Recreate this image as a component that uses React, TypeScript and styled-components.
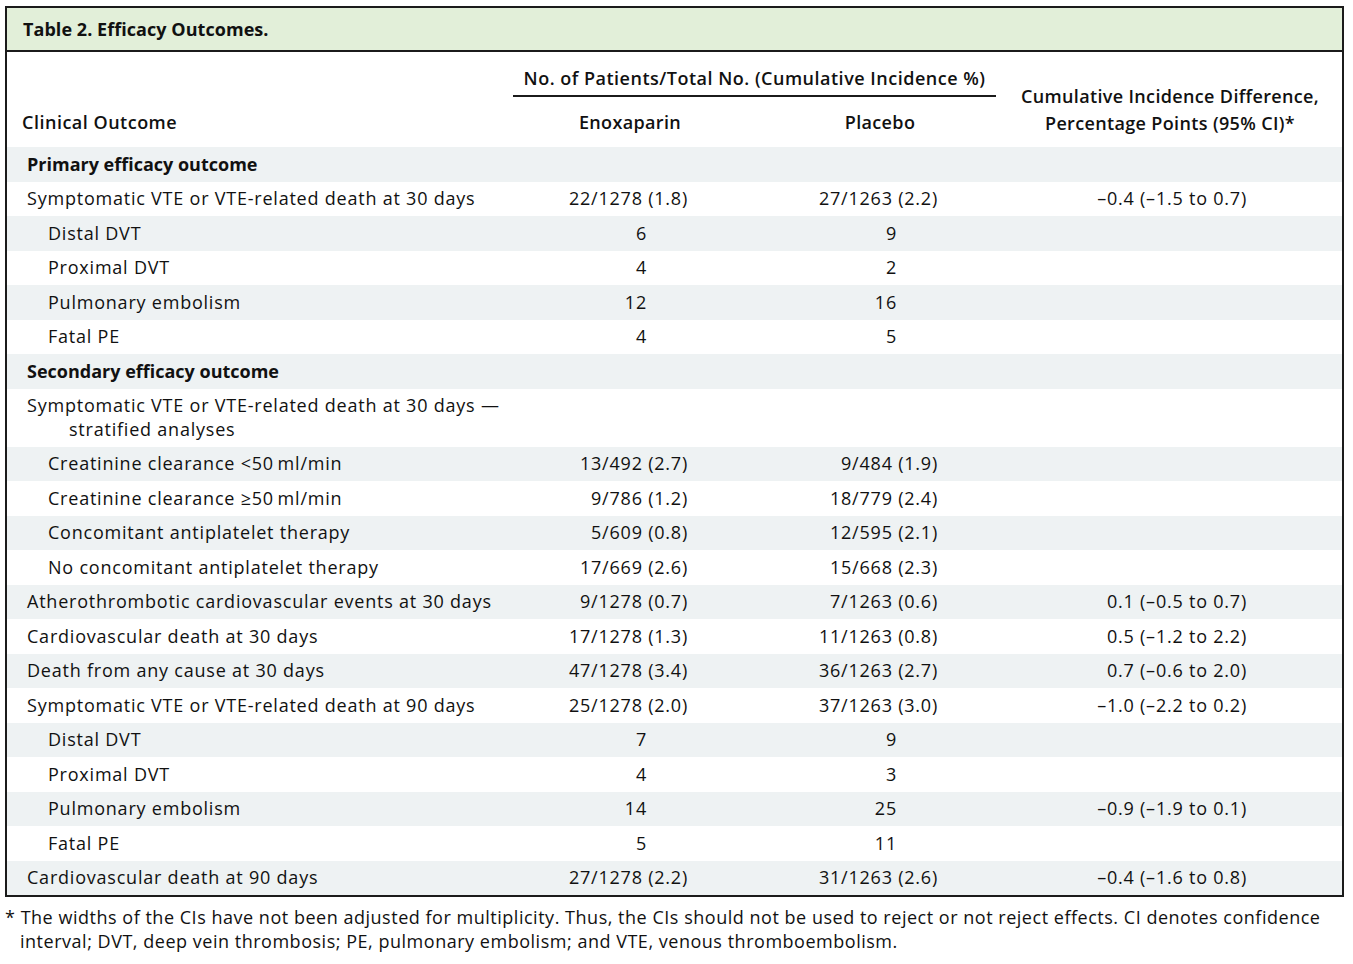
import React from "react";
import styled, { createGlobalStyle } from "styled-components";

const GlobalStyle = createGlobalStyle`
  html, body { margin: 0; padding: 0; background: #ffffff; }
  body {
    font-family: "Open Sans", "Noto Sans", "Liberation Sans", sans-serif;
    color: #111111;
  }
`;

const Page = styled.div`
  padding: 6px 0 0 5px;
  width: 1353px;
  box-sizing: border-box;
`;

const TableBox = styled.div`
  width: 1339px;
  box-sizing: border-box;
  border: 2px solid #1b1b1b;
`;

const TitleBar = styled.div`
  background: #e2efd9;
  border-bottom: 2px solid #1b1b1b;
  height: 42px;
  display: flex;
  align-items: center;
  padding-left: 16px;
  font-size: 18px;
  font-weight: 700;
  letter-spacing: 0.05px;
`;

const cols = "498px 250px 250px 330px";

const HeaderGrid = styled.div`
  display: grid;
  grid-template-columns: ${cols};
  grid-template-rows: 45px 50px;
  font-weight: 600;
  font-size: 18px;
  letter-spacing: 0.35px;
`;

const OutcomeHead = styled.div`
  grid-column: 1;
  grid-row: 1 / span 2;
  display: flex;
  align-items: flex-end;
  padding: 0 0 13px 15px;
  line-height: 24px;
  letter-spacing: 0.5px;
`;

const GroupHead = styled.div`
  grid-column: 2 / span 2;
  grid-row: 1;
  margin: 14px 9px 0 8px;
  padding-bottom: 5px;
  border-bottom: 2px solid #1b1b1b;
  text-align: center;
  line-height: 24px;
  letter-spacing: 0.5px;
`;

const SubHead = styled.div<{ $col: number }>`
  grid-column: ${(p) => p.$col};
  grid-row: 2;
  text-align: center;
  line-height: 24px;
  padding-top: 13px;
`;

const DiffHead = styled.div`
  grid-column: 4;
  grid-row: 1 / span 2;
  display: flex;
  align-items: flex-end;
  justify-content: center;
  text-align: center;
  line-height: 26.5px;
  padding-bottom: 11px;
`;

const Row = styled.div<{ $shaded: boolean }>`
  display: grid;
  grid-template-columns: ${cols};
  background: ${(p) => (p.$shaded ? "#eef2f3" : "#ffffff")};
  font-size: 18px;
  line-height: 23.5px;
  padding: 5.5px 0;
  letter-spacing: 0.78px;
`;

const Label = styled.div<{ $level: number; $bold?: boolean }>`
  padding-left: ${(p) => (p.$level === 0 ? 62 : 83)}px;
  text-indent: -42px;
  font-weight: ${(p) => (p.$bold ? 700 : 400)};
  letter-spacing: ${(p) => (p.$bold ? "0px" : "0.78px")};
  white-space: pre-line;
`;

const Value = styled.div<{ $count?: boolean }>`
  text-align: right;
  padding-right: ${(p) => (p.$count ? 108 : 67)}px;
`;

const Diff = styled.div`
  text-align: right;
  padding-right: 88px;
`;

const Footnote = styled.div`
  margin-top: 8px;
  padding-left: 15px;
  text-indent: -15px;
  font-size: 18px;
  line-height: 24px;
  letter-spacing: 0.52px;
  width: 1345px;
  box-sizing: border-box;
`;

type Item =
  | { kind: "section"; label: string }
  | {
      kind: "data";
      label: string;
      level: number;
      enox?: string;
      plac?: string;
      diff?: string;
      count?: boolean;
    };

const items: Item[] = [
  { kind: "section", label: "Primary efficacy outcome" },
  {
    kind: "data",
    label: "Symptomatic VTE or VTE-related death at 30 days",
    level: 0,
    enox: "22/1278 (1.8)",
    plac: "27/1263 (2.2)",
    diff: "–0.4 (–1.5 to 0.7)",
  },
  { kind: "data", label: "Distal DVT", level: 1, enox: "6", plac: "9", count: true },
  { kind: "data", label: "Proximal DVT", level: 1, enox: "4", plac: "2", count: true },
  { kind: "data", label: "Pulmonary embolism", level: 1, enox: "12", plac: "16", count: true },
  { kind: "data", label: "Fatal PE", level: 1, enox: "4", plac: "5", count: true },
  { kind: "section", label: "Secondary efficacy outcome" },
  {
    kind: "data",
    label: "Symptomatic VTE or VTE-related death at 30 days —\nstratified analyses",
    level: 0,
  },
  {
    kind: "data",
    label: "Creatinine clearance <50\u2009ml/min",
    level: 1,
    enox: "13/492 (2.7)",
    plac: "9/484 (1.9)",
  },
  {
    kind: "data",
    label: "Creatinine clearance \u226550\u2009ml/min",
    level: 1,
    enox: "9/786 (1.2)",
    plac: "18/779 (2.4)",
  },
  {
    kind: "data",
    label: "Concomitant antiplatelet therapy",
    level: 1,
    enox: "5/609 (0.8)",
    plac: "12/595 (2.1)",
  },
  {
    kind: "data",
    label: "No concomitant antiplatelet therapy",
    level: 1,
    enox: "17/669 (2.6)",
    plac: "15/668 (2.3)",
  },
  {
    kind: "data",
    label: "Atherothrombotic cardiovascular events at 30 days",
    level: 0,
    enox: "9/1278 (0.7)",
    plac: "7/1263 (0.6)",
    diff: "0.1 (–0.5 to 0.7)",
  },
  {
    kind: "data",
    label: "Cardiovascular death at 30 days",
    level: 0,
    enox: "17/1278 (1.3)",
    plac: "11/1263 (0.8)",
    diff: "0.5 (–1.2 to 2.2)",
  },
  {
    kind: "data",
    label: "Death from any cause at 30 days",
    level: 0,
    enox: "47/1278 (3.4)",
    plac: "36/1263 (2.7)",
    diff: "0.7 (–0.6 to 2.0)",
  },
  {
    kind: "data",
    label: "Symptomatic VTE or VTE-related death at 90 days",
    level: 0,
    enox: "25/1278 (2.0)",
    plac: "37/1263 (3.0)",
    diff: "–1.0 (–2.2 to 0.2)",
  },
  { kind: "data", label: "Distal DVT", level: 1, enox: "7", plac: "9", count: true },
  { kind: "data", label: "Proximal DVT", level: 1, enox: "4", plac: "3", count: true },
  {
    kind: "data",
    label: "Pulmonary embolism",
    level: 1,
    enox: "14",
    plac: "25",
    count: true,
    diff: "–0.9 (–1.9 to 0.1)",
  },
  { kind: "data", label: "Fatal PE", level: 1, enox: "5", plac: "11", count: true },
  {
    kind: "data",
    label: "Cardiovascular death at 90 days",
    level: 0,
    enox: "27/1278 (2.2)",
    plac: "31/1263 (2.6)",
    diff: "–0.4 (–1.6 to 0.8)",
  },
];

export default function App() {
  return (
    <Page>
      <GlobalStyle />
      <TableBox>
        <TitleBar>Table 2. Efficacy Outcomes.</TitleBar>
        <HeaderGrid>
          <OutcomeHead>Clinical Outcome</OutcomeHead>
          <GroupHead>No. of Patients/Total No. (Cumulative Incidence %)</GroupHead>
          <SubHead $col={2}>Enoxaparin</SubHead>
          <SubHead $col={3}>Placebo</SubHead>
          <DiffHead>
            Cumulative Incidence Difference,
            <br />
            Percentage Points (95% CI)*
          </DiffHead>
        </HeaderGrid>
        {items.map((it, i) =>
          it.kind === "section" ? (
            <Row key={i} $shaded={i % 2 === 0}>
              <Label $level={0} $bold>
                {it.label}
              </Label>
            </Row>
          ) : (
            <Row key={i} $shaded={i % 2 === 0}>
              <Label $level={it.level}>{it.label}</Label>
              <Value $count={it.count}>{it.enox ?? ""}</Value>
              <Value $count={it.count}>{it.plac ?? ""}</Value>
              <Diff>{it.diff ?? ""}</Diff>
            </Row>
          )
        )}
      </TableBox>
      <Footnote>
        * The widths of the CIs have not been adjusted for multiplicity. Thus, the CIs should not be used to reject or not reject effects. CI denotes confidence
        <br />
        interval; DVT, deep vein thrombosis; PE, pulmonary embolism; and VTE, venous thromboembolism.
      </Footnote>
    </Page>
  );
}
